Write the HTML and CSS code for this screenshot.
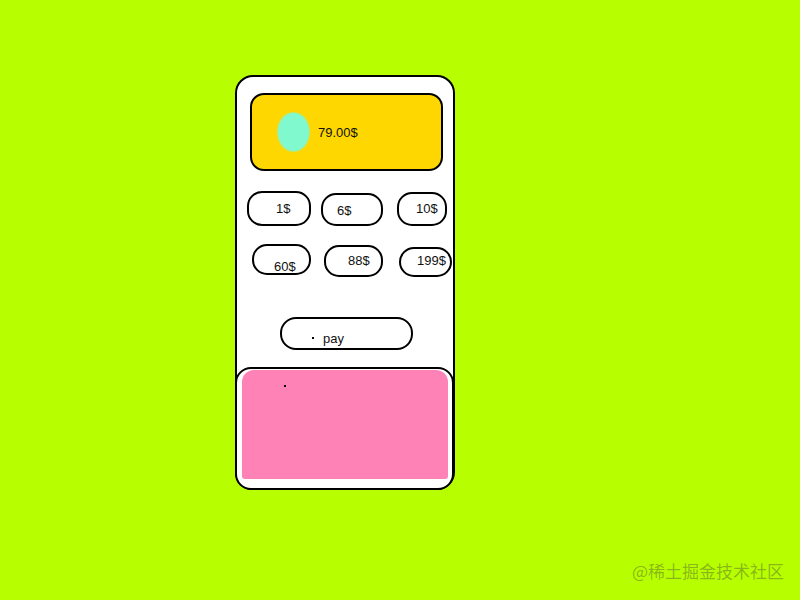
FILE: index.html
```html
<!DOCTYPE html>
<html>
<head>
<meta charset="utf-8">
<link rel="stylesheet" href="styles.css">
</head>
<body>
<div class="stage">
  <div class="phone">
    <div class="balance">
      <div class="avatar"></div>
      <div class="amount">79.00$</div>
    </div>
    <div class="row">
      <div class="btn b1">1$</div>
      <div class="btn b2">6$</div>
      <div class="btn b3">10$</div>
    </div>
    <div class="row">
      <div class="btn b4">60$</div>
      <div class="btn b5">88$</div>
      <div class="btn b6">199$</div>
    </div>
    <div class="btn pay"><span class="dot"></span><span>pay</span></div>
    <div class="panel">
      <div class="panel-fill"><span class="dot panel-dot"></span></div>
    </div>
  </div>
</div>
<div class="watermark">@稀土掘金技术社区</div>
</body>
</html>
```
FILE: styles.css
```css
html, body {
  margin: 0;
  padding: 0;
}
body {
  width: 800px;
  height: 600px;
  background: #b7ff00;
  font-family: "Liberation Sans", Arial, sans-serif;
  font-size: 13px;
  color: #111;
  overflow: hidden;
  position: relative;
}
.stage {
  padding: 75px 0 0 235px;
}
.phone {
  box-sizing: border-box;
  width: 220px;
  border: 2px solid #000;
  border-radius: 18px;
  background: #fff;
  display: flex;
  flex-direction: column;
  align-items: flex-start;
}
.balance {
  box-sizing: border-box;
  margin: 16px 0 0 13px;
  width: 193px;
  height: 78px;
  border: 2px solid #000;
  border-radius: 14px;
  background: #ffd700;
  display: flex;
  align-items: flex-start;
  padding-left: 26px;
}
.avatar {
  width: 31px;
  height: 38px;
  margin-top: 18px;
  border-radius: 50%;
  background: #80f9cf;
  box-shadow: 0 0 1px 1px rgba(128, 249, 207, 0.6);
}
.amount {
  margin: 30px 0 0 9px;
  line-height: 15px;
}
.row {
  display: flex;
  align-items: flex-start;
}
.btn {
  box-sizing: border-box;
  border: 2px solid #000;
  border-radius: 15px;
  line-height: 15px;
  display: flex;
  align-items: flex-start;
  white-space: nowrap;
}
.b1 { width: 64px; height: 35px; margin: 20px 0 0 10px; padding: 8px 0 0 27px; }
.b2 { width: 62px; height: 33px; margin: 22px 0 0 10px; padding: 8px 0 0 14px; }
.b3 { width: 50px; height: 34px; margin: 21px 0 0 14px; padding: 7px 0 0 17px; }
.b4 { width: 59px; height: 31px; margin: 18px 0 0 15px; padding: 13px 0 0 20px; }
.b5 { width: 59px; height: 32px; margin: 19px 0 0 13px; padding: 6px 0 0 22px; }
.b6 { width: 53px; height: 30px; margin: 21px 0 0 16px; padding: 4px 0 0 16px; }
.pay {
  width: 133px;
  height: 33px;
  margin: 40px 0 0 43px;
  padding: 12px 0 0 30px;
  border-radius: 16px;
}
.dot {
  display: block;
  width: 2px;
  height: 2px;
  background: #000;
}
.pay .dot {
  margin: 6px 9px 0 0;
}
.panel {
  box-sizing: border-box;
  width: 219px;
  height: 123px;
  margin: 17px 0 -2px -2px;
  border: 2px solid #000;
  border-radius: 16px;
  background: #fff;
  padding: 1px 4px 9px 5px;
}
.panel-fill {
  height: 100%;
  background: #ff82b7;
  border-radius: 12px 12px 3px 3px;
  padding: 15px 0 0 42px;
  box-sizing: border-box;
}
.watermark {
  position: absolute;
  left: 632px;
  top: 560px;
  font-family: "Noto Sans CJK SC", sans-serif;
  font-size: 17px;
  line-height: 22px;
  color: rgba(70, 80, 60, 0.42);
}
```
